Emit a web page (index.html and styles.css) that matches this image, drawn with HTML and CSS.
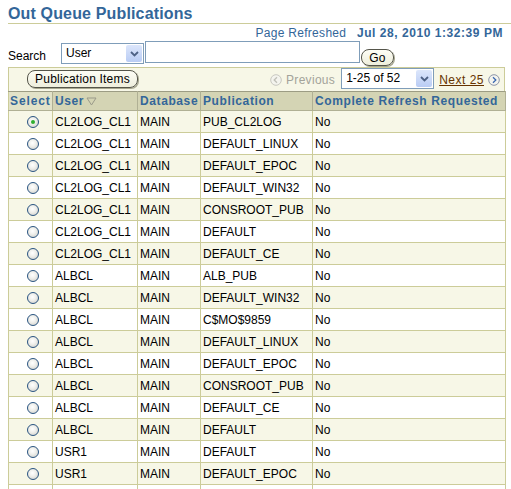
FILE: index.html
```html
<!DOCTYPE html>
<html>
<head>
<meta charset="utf-8">
<link rel="stylesheet" href="styles.css">
</head>
<body>
<div class="title">Out Queue Publications</div>
<div class="refreshed">Page Refreshed <b>Jul 28, 2010 1:32:39 PM</b></div>
<div class="search">
  <span class="search-label">Search</span>
  <div class="select sel-user"><span class="sel-text">User</span><span class="sel-btn"><svg width="9" height="6" viewBox="0 0 9 6"><path d="M1 1 L4.5 4.5 L8 1" fill="none" stroke="#4d6185" stroke-width="1.8"/></svg></span></div>
  <div class="text-input"></div>
  <div class="btn go">Go</div>
</div>
<div class="bar">
  <div class="btn pub-items">Publication Items</div>
  <div class="nav">
    <svg class="nav-icon" width="12" height="12" viewBox="0 0 12 12"><circle cx="6" cy="6" r="5.3" fill="#f4f4ee" stroke="#c8c8c0" stroke-width="1"/><path d="M7 3.3 L4.2 6 L7 8.7" fill="none" stroke="#c0c0b8" stroke-width="1.3"/></svg>
    <span class="prev">Previous</span>
    <div class="select sel-range"><span class="sel-text">1-25 of 52</span><span class="sel-btn"><svg width="9" height="6" viewBox="0 0 9 6"><path d="M1 1 L4.5 4.5 L8 1" fill="none" stroke="#4d6185" stroke-width="1.8"/></svg></span></div>
    <a class="next">Next 25</a>
    <svg class="nav-icon" width="12" height="12" viewBox="0 0 12 12"><circle cx="6" cy="6" r="5.3" fill="#f4f4ee" stroke="#8d96a8" stroke-width="1"/><path d="M5 3.3 L7.8 6 L5 8.7" fill="none" stroke="#3a68b0" stroke-width="1.3"/></svg>
  </div>
</div>
<table class="grid">
  <colgroup><col class="c1"><col class="c2"><col class="c3"><col class="c4"><col class="c5"></colgroup>
  <thead>
    <tr><th class="h-select">Select</th><th>User <svg class="sort" width="11" height="9" viewBox="0 0 11 9"><path d="M1 1 H10 L5.5 8 Z" fill="none" stroke="#9a9a8a" stroke-width="1"/></svg></th><th>Database</th><th>Publication</th><th>Complete Refresh Requested</th></tr>
  </thead>
  <tbody>
    <tr class="odd"><td class="rc"><span class="radio on"></span></td><td>CL2LOG_CL1</td><td>MAIN</td><td>PUB_CL2LOG</td><td>No</td></tr>
    <tr><td class="rc"><span class="radio"></span></td><td>CL2LOG_CL1</td><td>MAIN</td><td>DEFAULT_LINUX</td><td>No</td></tr>
    <tr class="odd"><td class="rc"><span class="radio"></span></td><td>CL2LOG_CL1</td><td>MAIN</td><td>DEFAULT_EPOC</td><td>No</td></tr>
    <tr><td class="rc"><span class="radio"></span></td><td>CL2LOG_CL1</td><td>MAIN</td><td>DEFAULT_WIN32</td><td>No</td></tr>
    <tr class="odd"><td class="rc"><span class="radio"></span></td><td>CL2LOG_CL1</td><td>MAIN</td><td>CONSROOT_PUB</td><td>No</td></tr>
    <tr><td class="rc"><span class="radio"></span></td><td>CL2LOG_CL1</td><td>MAIN</td><td>DEFAULT</td><td>No</td></tr>
    <tr class="odd"><td class="rc"><span class="radio"></span></td><td>CL2LOG_CL1</td><td>MAIN</td><td>DEFAULT_CE</td><td>No</td></tr>
    <tr><td class="rc"><span class="radio"></span></td><td>ALBCL</td><td>MAIN</td><td>ALB_PUB</td><td>No</td></tr>
    <tr class="odd"><td class="rc"><span class="radio"></span></td><td>ALBCL</td><td>MAIN</td><td>DEFAULT_WIN32</td><td>No</td></tr>
    <tr><td class="rc"><span class="radio"></span></td><td>ALBCL</td><td>MAIN</td><td>C$MO$9859</td><td>No</td></tr>
    <tr class="odd"><td class="rc"><span class="radio"></span></td><td>ALBCL</td><td>MAIN</td><td>DEFAULT_LINUX</td><td>No</td></tr>
    <tr><td class="rc"><span class="radio"></span></td><td>ALBCL</td><td>MAIN</td><td>DEFAULT_EPOC</td><td>No</td></tr>
    <tr class="odd"><td class="rc"><span class="radio"></span></td><td>ALBCL</td><td>MAIN</td><td>CONSROOT_PUB</td><td>No</td></tr>
    <tr><td class="rc"><span class="radio"></span></td><td>ALBCL</td><td>MAIN</td><td>DEFAULT_CE</td><td>No</td></tr>
    <tr class="odd"><td class="rc"><span class="radio"></span></td><td>ALBCL</td><td>MAIN</td><td>DEFAULT</td><td>No</td></tr>
    <tr><td class="rc"><span class="radio"></span></td><td>USR1</td><td>MAIN</td><td>DEFAULT</td><td>No</td></tr>
    <tr class="odd"><td class="rc"><span class="radio"></span></td><td>USR1</td><td>MAIN</td><td>DEFAULT_EPOC</td><td>No</td></tr>
    <tr><td class="rc"></td><td></td><td></td><td></td><td></td></tr>
  </tbody>
</table>
</body>
</html>
```

FILE: styles.css
```css
html, body {
  margin: 0;
  padding: 0;
  background: #ffffff;
}
body {
  padding-left: 8px;
  font-family: "Liberation Sans", Arial, sans-serif;
  font-size: 12px;
  color: #000000;
  overflow: hidden;
}
.title {
  padding-top: 4px;
  line-height: 19px;
  font-size: 16px;
  font-weight: bold;
  letter-spacing: 0.15px;
  color: #336699;
  border-bottom: 1px solid #cccc99;
}
.refreshed {
  height: 18px;
  line-height: 18px;
  text-align: right;
  padding-right: 8px;
  color: #336699;
  letter-spacing: 0.3px;
}
.refreshed b {
  margin-left: 7px;
  letter-spacing: 0.55px;
}
.search {
  display: flex;
  align-items: flex-start;
  height: 25px;
}
.search-label {
  width: 53px;
  margin-top: 7px;
  line-height: 14px;
}
.select {
  box-sizing: border-box;
  display: flex;
  align-items: center;
  border: 1px solid #7f9db9;
  background: #ffffff;
  height: 21px;
  padding: 1px;
}
.sel-text {
  flex: 1;
  padding-left: 3px;
  line-height: 17px;
}
.sel-btn {
  width: 16px;
  height: 17px;
  display: flex;
  align-items: center;
  justify-content: center;
  background: linear-gradient(#dce6fb, #b9ccf4);
  border-radius: 2px;
}
.sel-user {
  width: 83px;
  margin-top: 1px;
}
.text-input {
  box-sizing: border-box;
  width: 215px;
  height: 22px;
  margin-top: -1px;
  margin-left: 1px;
  border: 1px solid #7f9db9;
  background: #ffffff;
}
.btn {
  box-sizing: border-box;
  display: flex;
  align-items: center;
  justify-content: center;
  border: 1px solid #55554a;
  border-radius: 8px;
  background: linear-gradient(#fdfdf5, #eeeedc);
  box-shadow: 1px 1px 0 #a8a890;
  letter-spacing: 0.2px;
}
.go {
  width: 33px;
  height: 17px;
  margin-top: 7px;
  margin-left: 1px;
}
.bar {
  box-sizing: border-box;
  width: 497px;
  height: 24px;
  border: 1px solid #cccc99;
  border-bottom: none;
  background: #f7f7e7;
  display: flex;
  align-items: center;
}
.pub-items {
  width: 111px;
  height: 18px;
  margin-left: 18px;
  margin-top: -1px;
}
.nav {
  margin-left: auto;
  display: flex;
  align-items: center;
  padding-right: 4px;
  height: 100%;
}
.nav-icon {
  display: block;
}
.prev {
  color: #a3a39a;
  margin-left: 4px;
  margin-right: 6px;
  letter-spacing: 0.3px;
}
.sel-range {
  width: 93px;
  align-self: flex-start;
}
.next {
  color: #663300;
  text-decoration: underline;
  margin-left: 5px;
  margin-right: 4px;
  letter-spacing: 0.5px;
}
.grid {
  width: 497px;
  border-collapse: collapse;
  table-layout: fixed;
}
.c1 { width: 44px; }
.c2 { width: 85px; }
.c3 { width: 63px; }
.c4 { width: 112px; }
.c5 { width: 193px; }
.grid th {
  height: 18px;
  padding: 0 0 0 2px;
  text-align: left;
  font-weight: bold;
  letter-spacing: 0.6px;
  color: #336699;
  background: #d4d4b4;
  border-top: 1px solid #9c9c84;
  border-bottom: 1px solid #b0b094;
  border-left: 1px solid #eeeedc;
  border-right: 1px solid #b0b094;
  white-space: nowrap;
  overflow: hidden;
}
.grid th.h-select {
  background: #e2e2c8;
  padding-left: 1px;
  letter-spacing: 0.9px;
  border-left: 1px solid #cccc99;
}
.sort {
  vertical-align: -1px;
  margin-left: -2px;
}
.grid td {
  height: 21px;
  padding: 0 0 0 2px;
  border: 1px solid #cccc99;
  white-space: nowrap;
  overflow: hidden;
}
.grid tr.odd td {
  background: #f7f7e7;
}
.grid td.rc {
  text-align: center;
  padding-left: 4px;
}
.radio {
  display: inline-block;
  box-sizing: border-box;
  width: 12px;
  height: 12px;
  border-radius: 50%;
  border: 1px solid #2a5582;
  background: radial-gradient(circle at 45% 40%, #ffffff 0%, #f0f0ec 40%, #c8c8c4 100%);
  vertical-align: middle;
  position: relative;
}
.radio.on::after {
  content: "";
  position: absolute;
  left: 3px;
  top: 3px;
  width: 4px;
  height: 4px;
  border-radius: 50%;
  background: #2fae2f;
}
```
